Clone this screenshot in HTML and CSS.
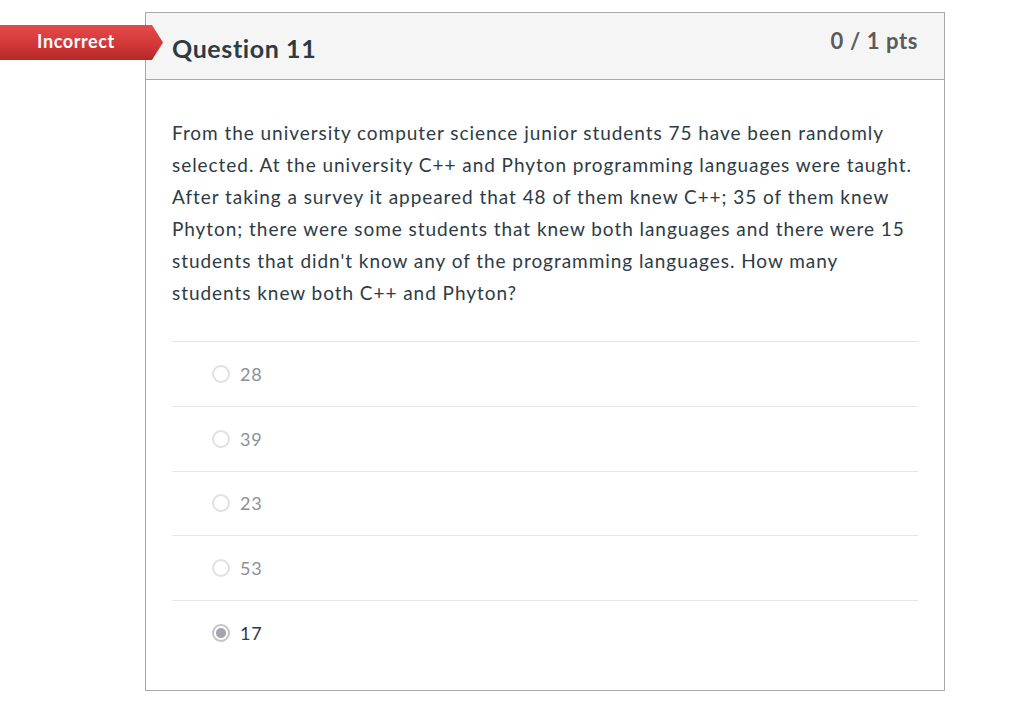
FILE: index.html
```html
<!DOCTYPE html>
<html>
<head>
<meta charset="utf-8">
<link rel="stylesheet" href="styles.css">
</head>
<body>
<div class="page">
  <div class="badge"><span class="badge-text">Incorrect</span></div>
  <div class="card">
    <div class="card-header">
      <h2 class="q-title">Question 11</h2>
      <div class="q-pts">0 / 1 pts</div>
    </div>
    <div class="card-body">
      <p class="q-text">From the university computer science junior students 75 have been randomly selected. At the university C++ and Phyton programming languages were taught. After taking a survey it appeared that 48 of them knew C++; 35 of them knew Phyton; there were some students that knew both languages and there were 15 students that didn't know any of the programming languages. How many students knew both C++ and Phyton?</p>
      <div class="answers">
        <div class="answer"><span class="radio"></span><span class="a-text">28</span></div>
        <div class="answer"><span class="radio"></span><span class="a-text">39</span></div>
        <div class="answer"><span class="radio"></span><span class="a-text">23</span></div>
        <div class="answer"><span class="radio"></span><span class="a-text">53</span></div>
        <div class="answer selected"><span class="radio"></span><span class="a-text">17</span></div>
      </div>
    </div>
  </div>
</div>
</body>
</html>
```
FILE: styles.css
```css
html, body {
  margin: 0;
  padding: 0;
  background: #ffffff;
}
body {
  font-family: Lato, "Open Sans", "Liberation Sans", sans-serif;
  color: #2d3b45;
}
.page {
  position: relative;
  padding: 12px 0 0 145px;
}
.badge {
  position: absolute;
  left: 0;
  top: 25px;
  width: 163px;
  height: 35px;
  background: linear-gradient(to bottom, #e64a4a 0%, #d23838 55%, #b42828 100%);
  clip-path: polygon(0 0, 152px 0, 163px 17.5px, 152px 35px, 0 35px);
}
.badge-text {
  display: block;
  width: 152px;
  text-align: center;
  color: #ffffff;
  font-weight: 700;
  font-size: 18px;
  letter-spacing: 0.6px;
  line-height: 32px;
}
.card {
  width: 800px;
  height: 679px;
  box-sizing: border-box;
  border: 1px solid #a8a8a8;
}
.card-header {
  display: flex;
  justify-content: space-between;
  align-items: flex-start;
  height: 66px;
  background: #f5f5f5;
  border-bottom: 1px solid #a8a8a8;
  padding: 0 26px 0 26px;
}
.q-title {
  margin: 0;
  padding-top: 20px;
  font-size: 25px;
  letter-spacing: 0.6px;
  line-height: 30px;
  font-weight: 700;
  color: #2d3b45;
}
.q-pts {
  padding-top: 13px;
  font-size: 22px;
  letter-spacing: 0.6px;
  line-height: 30px;
  font-weight: 700;
  color: #5b5b5b;
}
.card-body {
  padding: 37px 26px 0 26px;
}
.q-text {
  margin: 0 0 32px 0;
  font-size: 19px;
  letter-spacing: 0.95px;
  line-height: 32px;
  color: #2d3b45;
}
.answer {
  display: flex;
  align-items: center;
  height: 63.75px;
  border-top: 1px solid #e6e6e6;
  padding-left: 40px;
}
.radio {
  width: 14px;
  height: 14px;
  border-radius: 50%;
  border: 2px solid #e0e0e0;
  margin-right: 10px;
  box-sizing: content-box;
}
.a-text {
  font-size: 18px;
  letter-spacing: 0.8px;
  color: #8a9096;
}
.selected .radio {
  border-color: #c4c4c8;
  background: radial-gradient(circle, #a5a5ae 0 4.5px, #ffffff 5.5px);
}
.selected .a-text {
  color: #2d3b45;
}
```
